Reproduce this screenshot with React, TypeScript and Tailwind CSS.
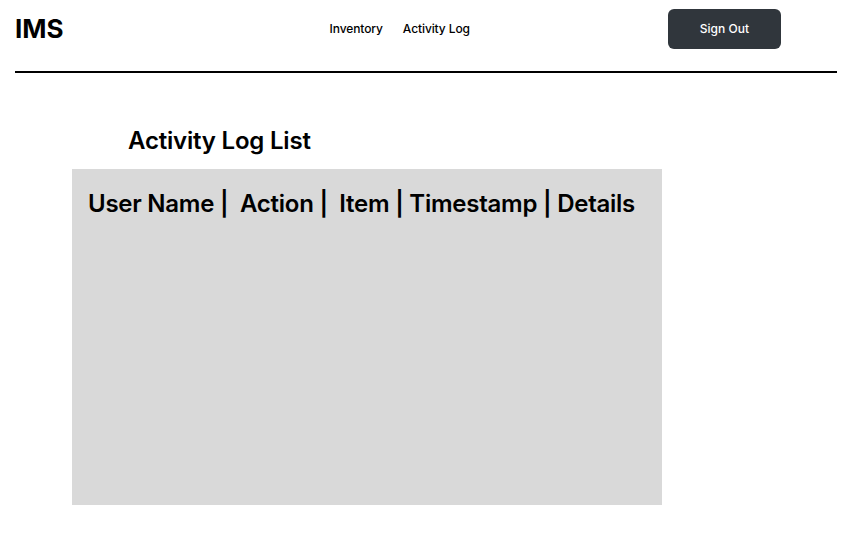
const columns = ["User Name", "Action", "Item", "Timestamp", "Details"];
const separators = [" |  ", " |  ", " | ", " | "];

export default function App() {
  return (
    <div className="w-[849px] h-[553px] bg-white text-black font-['Inter','Liberation_Sans',sans-serif]">
      <header className="flex items-center h-[58px] pl-[15px]">
        <h1 className="text-[26px] font-bold leading-none">IMS</h1>
        <nav className="flex gap-[20px] ml-[266px] text-[12px] font-medium tracking-[-0.1px]">
          <a>Inventory</a>
          <a>Activity Log</a>
        </nav>
        <button className="ml-[198px] w-[113px] h-[40px] rounded-[6px] bg-[#30363c] text-white text-[12px] font-medium">
          Sign Out
        </button>
      </header>
      <div className="ml-[15px] w-[822px] h-[2px] bg-black mt-[13px]" />

      {/* Activity log */}
      <main className="pl-[72px] pt-[53px]">
        <h2 className="ml-[56px] text-[24px] font-semibold leading-[29px] tracking-[-0.2px]">Activity Log List</h2>
        <div className="mt-[14px] w-[590px] h-[336px] bg-[#d9d9d9] pl-[16px] pt-[20px]">
          <div className="flex text-[24px] font-semibold leading-[29px] tracking-[-0.25px] whitespace-pre">
            {columns.map((c, i) => (
              <span key={c} className="flex">
                <span>{c}</span>
                {i < separators.length && <span>{separators[i]}</span>}
              </span>
            ))}
          </div>
        </div>
      </main>
    </div>
  );
}
